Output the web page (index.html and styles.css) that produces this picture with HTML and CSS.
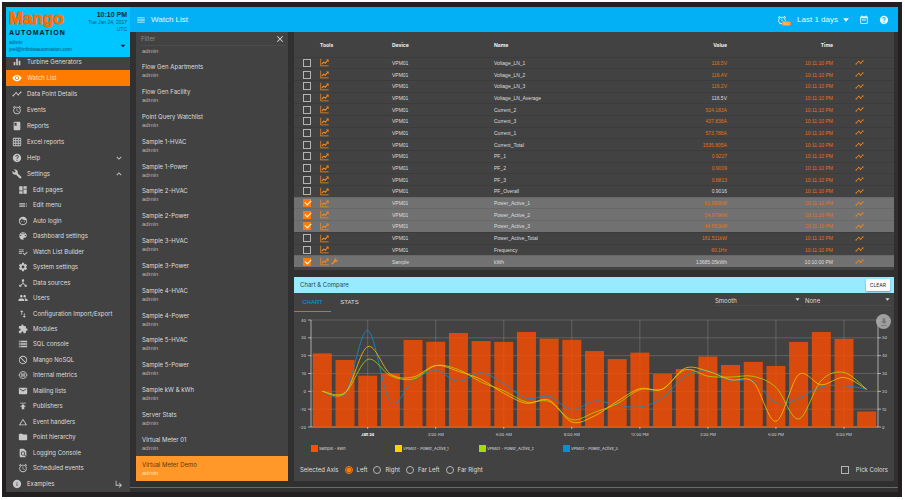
FILE: index.html
```html
<!DOCTYPE html>
<html lang="en">
<head>
<meta charset="utf-8">
<meta name="viewport" content="width=device-width, initial-scale=1">
<title>Mango Automation - Watch List</title>
<link rel="stylesheet" href="styles.css">
</head>
<body>
<svg class="sprite" aria-hidden="true">
  <symbol id="bars" viewBox="0 0 24 24"><path d="M10 20h4V4h-4v16zm-6 0h4v-8H4v8zM16 9v11h4V9h-4z"/></symbol>
  <symbol id="eye" viewBox="0 0 24 24"><path d="M12 4.5C7 4.5 2.73 7.61 1 12c1.73 4.39 6 7.5 11 7.5s9.27-3.11 11-7.5c-1.73-4.39-6-7.5-11-7.5zM12 17c-2.76 0-5-2.24-5-5s2.24-5 5-5 5 2.24 5 5-2.24 5-5 5zm0-8c-1.66 0-3 1.34-3 3s1.34 3 3 3 3-1.34 3-3-1.34-3-3-3z"/></symbol>
  <symbol id="timeline" viewBox="0 0 24 24"><path d="M23 8c0 1.1-.9 2-2 2-.18 0-.35-.02-.51-.07l-3.56 3.55c.05.16.07.34.07.52 0 1.1-.9 2-2 2s-2-.9-2-2c0-.18.02-.36.07-.52l-2.55-2.55c-.16.05-.34.07-.52.07s-.36-.02-.52-.07l-4.55 4.56c.05.16.07.33.07.51 0 1.1-.9 2-2 2s-2-.9-2-2 .9-2 2-2c.18 0 .35.02.51.07l4.56-4.55C8.02 9.36 8 9.18 8 9c0-1.1.9-2 2-2s2 .9 2 2c0 .18-.02.36-.07.52l2.55 2.55c.16-.05.34-.07.52-.07s.36.02.52.07l3.55-3.56C19.02 8.35 19 8.18 19 8c0-1.1.9-2 2-2s2 .9 2 2z"/></symbol>
  <symbol id="alarm" viewBox="0 0 24 24"><path d="M22 5.72l-4.6-3.86-1.29 1.53 4.6 3.86L22 5.72zM7.88 3.39L6.6 1.86 2 5.71l1.29 1.53 4.59-3.85zM12.5 8H11v6l4.75 2.85.75-1.23-4-2.37V8zM12 4c-4.97 0-9 4.03-9 9s4.02 9 9 9c4.97 0 9-4.03 9-9s-4.03-9-9-9zm0 16c-3.87 0-7-3.13-7-7s3.13-7 7-7 7 3.13 7 7-3.13 7-7 7z"/></symbol>
  <symbol id="book" viewBox="0 0 24 24"><path d="M18 2H6c-1.1 0-2 .9-2 2v16c0 1.1.9 2 2 2h12c1.1 0 2-.9 2-2V4c0-1.1-.9-2-2-2zM6 4h5v8l-2.5-1.5L6 12V4z"/></symbol>
  <symbol id="grid" viewBox="0 0 24 24"><path d="M20 2H4c-1.1 0-2 .9-2 2v16c0 1.1.9 2 2 2h16c1.1 0 2-.9 2-2V4c0-1.1-.9-2-2-2zM8 20H4v-4h4v4zm0-6H4v-4h4v4zm0-6H4V4h4v4zm6 12h-4v-4h4v4zm0-6h-4v-4h4v4zm0-6h-4V4h4v4zm6 12h-4v-4h4v4zm0-6h-4v-4h4v4zm0-6h-4V4h4v4z"/></symbol>
  <symbol id="help" viewBox="0 0 24 24"><path d="M12 2C6.48 2 2 6.48 2 12s4.48 10 10 10 10-4.48 10-10S17.52 2 12 2zm1 17h-2v-2h2v2zm2.07-7.75l-.9.92C13.45 12.9 13 13.5 13 15h-2v-.5c0-1.1.45-2.1 1.17-2.83l1.24-1.26c.37-.36.59-.86.59-1.41 0-1.1-.9-2-2-2s-2 .9-2 2H8c0-2.21 1.79-4 4-4s4 1.79 4 4c0 .88-.36 1.68-.93 2.25z"/></symbol>
  <symbol id="build" viewBox="0 0 24 24"><path d="M22.7 19l-9.1-9.1c.9-2.3.4-5-1.5-6.9-2-2-5-2.4-7.4-1.3L9 6 6 9 1.6 4.7C.4 7.1.9 10.1 2.9 12.1c1.9 1.9 4.6 2.4 6.9 1.5l9.1 9.1c.4.4 1 .4 1.4 0l2.3-2.3c.5-.4.5-1.1.1-1.4z"/></symbol>
  <symbol id="dashboard" viewBox="0 0 24 24"><path d="M3 13h8V3H3v10zm0 8h8v-6H3v6zm10 0h8V11h-8v10zm0-18v6h8V3h-8z"/></symbol>
  <symbol id="toc" viewBox="0 0 24 24"><path d="M3 9h14V7H3v2zm0 4h14v-2H3v2zm0 4h14v-2H3v2zm16 0h2v-2h-2v2zm0-10v2h2V7h-2zm0 6h2v-2h-2v2z"/></symbol>
  <symbol id="face" viewBox="0 0 24 24"><path d="M9 11.75c-.69 0-1.25.56-1.25 1.25s.56 1.25 1.25 1.25 1.25-.56 1.25-1.25-.56-1.25-1.25-1.25zm6 0c-.69 0-1.25.56-1.25 1.25s.56 1.25 1.25 1.25 1.25-.56 1.25-1.25-.56-1.25-1.25-1.25zM12 2C6.48 2 2 6.48 2 12s4.48 10 10 10 10-4.48 10-10S17.52 2 12 2zm0 18c-4.41 0-8-3.59-8-8 0-.29.02-.58.05-.86 2.36-1.05 4.23-2.98 5.21-5.37C11.07 8.33 14.05 10 17.42 10c.78 0 1.53-.09 2.25-.26.21.71.33 1.47.33 2.26 0 4.41-3.59 8-8 8z"/></symbol>
  <symbol id="palette" viewBox="0 0 24 24"><path d="M12 3c-4.97 0-9 4.03-9 9s4.03 9 9 9c.83 0 1.5-.67 1.5-1.5 0-.39-.15-.74-.39-1.01-.23-.26-.38-.61-.38-.99 0-.83.67-1.5 1.5-1.5H16c2.76 0 5-2.24 5-5 0-4.42-4.03-8-9-8zm-5.5 9c-.83 0-1.5-.67-1.5-1.5S5.67 9 6.5 9 8 9.67 8 10.5 7.33 12 6.5 12zm3-4C8.67 8 8 7.33 8 6.5S8.67 5 9.5 5s1.5.67 1.5 1.5S10.33 8 9.5 8zm5 0c-.83 0-1.5-.67-1.5-1.5S13.67 5 14.5 5s1.5.67 1.5 1.5S15.33 8 14.5 8zm3 4c-.83 0-1.5-.67-1.5-1.5S16.67 9 17.5 9s1.5.67 1.5 1.5-.67 1.5-1.5 1.5z"/></symbol>
  <symbol id="playlist" viewBox="0 0 24 24"><path d="M14 10H2v2h12v-2zm0-4H2v2h12V6zM2 16h8v-2H2v2zm19.5-4.5L23 13l-6.99 7-4.51-4.5L13 14l3.01 3 5.49-5.5z"/></symbol>
  <symbol id="gear" viewBox="0 0 24 24"><path d="M19.43 12.98c.04-.32.07-.64.07-.98s-.03-.66-.07-.98l2.11-1.65c.19-.15.24-.42.12-.64l-2-3.46c-.12-.22-.39-.3-.61-.22l-2.49 1c-.52-.4-1.08-.73-1.69-.98l-.38-2.65C14.46 2.18 14.25 2 14 2h-4c-.25 0-.46.18-.49.42l-.38 2.65c-.61.25-1.17.59-1.69.98l-2.49-1c-.23-.09-.49 0-.61.22l-2 3.46c-.13.22-.07.49.12.64l2.11 1.65c-.04.32-.07.65-.07.98s.03.66.07.98l-2.11 1.65c-.19.15-.24.42-.12.64l2 3.46c.12.22.39.3.61.22l2.49-1c.52.4 1.08.73 1.69.98l.38 2.65c.03.24.24.42.49.42h4c.25 0 .46-.18.49-.42l.38-2.65c.61-.25 1.17-.59 1.69-.98l2.49 1c.23.09.49 0 .61-.22l2-3.46c.12-.22.07-.49-.12-.64l-2.11-1.65zM12 15.5c-1.93 0-3.5-1.57-3.5-3.5s1.57-3.5 3.5-3.5 3.5 1.57 3.5 3.5-1.57 3.5-3.5 3.5z"/></symbol>
  <symbol id="hub" viewBox="0 0 24 24"><path d="M17 16l-4-4V8.82C14.16 8.4 15 7.3 15 6c0-1.66-1.34-3-3-3S9 4.34 9 6c0 1.3.84 2.4 2 2.82V12l-4 4H3v5h5v-3.05l4-4.2 4 4.2V21h5v-5h-4z"/></symbol>
  <symbol id="people" viewBox="0 0 24 24"><path d="M16 11c1.66 0 2.99-1.34 2.99-3S17.66 5 16 5c-1.66 0-3 1.34-3 3s1.34 3 3 3zm-8 0c1.66 0 2.99-1.34 2.99-3S9.66 5 8 5C6.34 5 5 6.34 5 8s1.34 3 3 3zm0 2c-2.33 0-7 1.17-7 3.5V19h14v-2.5c0-2.33-4.67-3.5-7-3.5zm8 0c-.29 0-.62.02-.97.05 1.16.84 1.97 1.97 1.97 3.45V19h6v-2.5c0-2.33-4.67-3.5-7-3.5z"/></symbol>
  <symbol id="swap" viewBox="0 0 24 24"><path d="M9 3L5 6.99h3V14h2V6.99h3L9 3zm7 14.01V10h-2v7.01h-3L15 21l4-3.99h-3z"/></symbol>
  <symbol id="puzzle" viewBox="0 0 24 24"><path d="M20.5 11H19V7c0-1.1-.9-2-2-2h-4V3.5C13 2.12 11.88 1 10.5 1S8 2.12 8 3.5V5H4c-1.1 0-1.99.9-1.99 2v3.8H3.5c1.49 0 2.7 1.21 2.7 2.7s-1.21 2.7-2.7 2.7H2V20c0 1.1.9 2 2 2h3.8v-1.5c0-1.49 1.21-2.7 2.7-2.7 1.49 0 2.7 1.21 2.7 2.7V22H17c1.1 0 2-.9 2-2v-4h1.5c1.38 0 2.5-1.12 2.5-2.5S21.88 11 20.5 11z"/></symbol>
  <symbol id="storage" viewBox="0 0 24 24"><path d="M2 20h20v-4H2v4zm2-3h2v2H4v-2zM2 4v4h20V4H2zm4 3H4V5h2v2zm-4 7h20v-4H2v4zm2-3h2v2H4v-2z"/></symbol>
  <symbol id="blocked" viewBox="0 0 24 24"><path d="M12 2C6.48 2 2 6.48 2 12s4.48 10 10 10 10-4.48 10-10S17.52 2 12 2zm0 18c-4.42 0-8-3.58-8-8 0-1.85.63-3.55 1.69-4.9L16.9 18.31C15.55 19.37 13.85 20 12 20zm6.31-3.1L7.1 5.69C8.45 4.63 10.15 4 12 4c4.42 0 8 3.58 8 8 0 1.85-.63 3.55-1.69 4.9z"/></symbol>
  <symbol id="metrics" viewBox="0 0 24 24"><g fill="none" stroke="currentColor" stroke-width="2"><circle cx="12" cy="12" r="8.5"/><path d="M9 7v10M15 7v10M9 10h6M9 14h6M1 12h3M20 12h3"/></g></symbol>
  <symbol id="mail" viewBox="0 0 24 24"><path d="M20 4H4c-1.1 0-2 .9-2 2v12c0 1.1.9 2 2 2h16c1.1 0 2-.9 2-2V6c0-1.1-.9-2-2-2zm0 4l-8 5-8-5V6l8 5 8-5v2z"/></symbol>
  <symbol id="publish" viewBox="0 0 24 24"><path d="M5 4v2h14V4H5zm0 10h4v6h6v-6h4l-7-7-7 7z"/></symbol>
  <symbol id="triangle" viewBox="0 0 24 24"><path d="M12 7.77L18.39 18H5.61L12 7.77M12 4L2 20h20L12 4z"/></symbol>
  <symbol id="folder" viewBox="0 0 24 24"><path d="M10 4H4c-1.1 0-1.99.9-1.99 2L2 18c0 1.1.9 2 2 2h16c1.1 0 2-.9 2-2V8c0-1.1-.9-2-2-2h-8l-2-2z"/></symbol>
  <symbol id="find" viewBox="0 0 24 24"><path d="M20 19.59V8l-6-6H6c-1.1 0-1.99.9-1.99 2L4 20c0 1.1.89 2 1.99 2H18c.45 0 .85-.15 1.19-.4l-4.43-4.43c-.8.52-1.74.83-2.76.83-2.76 0-5-2.24-5-5s2.24-5 5-5 5 2.24 5 5c0 1.02-.31 1.96-.83 2.75L20 19.59zM9 13c0 1.66 1.34 3 3 3s3-1.34 3-3-1.34-3-3-3-3 1.34-3 3z"/></symbol>
  <symbol id="info" viewBox="0 0 24 24"><path d="M12 2C6.48 2 2 6.48 2 12s4.48 10 10 10 10-4.48 10-10S17.52 2 12 2zm1 15h-2v-6h2v6zm0-8h-2V7h2v2z"/></symbol>
  <symbol id="subdir" viewBox="0 0 24 24"><path d="M19 15l-6 6-1.42-1.42L15.17 16H4V4h2v10h9.17l-3.59-3.58L13 9l6 6z"/></symbol>
  <symbol id="down" viewBox="0 0 24 24"><path d="M16.59 8.59L12 13.17 7.41 8.59 6 10l6 6 6-6z"/></symbol>
  <symbol id="up" viewBox="0 0 24 24"><path d="M12 8l-6 6 1.41 1.41L12 10.83l4.59 4.58L18 14z"/></symbol>
  <symbol id="drop" viewBox="0 0 24 24"><path d="M5 8l7 8 7-8z"/></symbol>
  <symbol id="menu" viewBox="0 0 24 24"><path d="M3 18h18v-2H3v2zm0-5h18v-2H3v2zm0-7v2h18V6H3z"/></symbol>
  <symbol id="close" viewBox="0 0 24 24"><path d="M19 6.41L17.59 5 12 10.59 6.41 5 5 6.41 10.59 12 5 17.59 6.41 19 12 13.41 17.59 19 19 17.59 13.41 12z"/></symbol>
  <symbol id="calendar" viewBox="0 0 24 24"><path d="M19 3h-1V1h-2v2H8V1H6v2H5c-1.1 0-2 .9-2 2v14c0 1.1.9 2 2 2h14c1.1 0 2-.9 2-2V5c0-1.1-.9-2-2-2zm0 16H5V8h14v11zM7 11h10v2H7z"/></symbol>
  <symbol id="chart" viewBox="0 0 24 24"><path d="M1 2h2v18h20v2H1z"/><path d="M5 16l5-5 4 3 6-7" fill="none" stroke="currentColor" stroke-width="3"/><path d="M16 4h7v7z"/></symbol>
  <symbol id="download" viewBox="0 0 24 24"><path d="M19 10h-4V3H9v7H5l7 7 7-7zM5 19v2h14v-2H5z"/></symbol>
</svg>

<div class="app">
  <aside class="sidebar">
    <header class="account">
      <div class="account-top">
        <div class="logo"><span class="logo-name">Mango</span><span class="logo-sub">AUTOMATION</span></div>
        <div class="clock"><strong>10:10 PM</strong><span>Tue Jan 24, 2017</span><span>UTC</span></div>
      </div>
      <button class="user" type="button"><span>admin<br>joel@infiniteautomation.com</span><svg class="icon"><use href="#drop"/></svg></button>
    </header>
    <nav class="nav">
      <ul class="menu">
        <li><a href="#"><svg class="icon"><use href="#bars"/></svg>Turbine Generators</a></li>
        <li><a href="#" class="active"><svg class="icon"><use href="#eye"/></svg>Watch List</a></li>
        <li><a href="#"><svg class="icon"><use href="#timeline"/></svg>Data Point Details</a></li>
        <li><a href="#"><svg class="icon"><use href="#alarm"/></svg>Events</a></li>
        <li><a href="#"><svg class="icon"><use href="#book"/></svg>Reports</a></li>
        <li><a href="#"><svg class="icon"><use href="#grid"/></svg>Excel reports</a></li>
        <li><a href="#"><svg class="icon"><use href="#help"/></svg>Help<svg class="icon toggle"><use href="#down"/></svg></a></li>
        <li class="open"><a href="#"><svg class="icon"><use href="#build"/></svg>Settings<svg class="icon toggle"><use href="#up"/></svg></a>
          <ul class="submenu">
            <li><a href="#"><svg class="icon"><use href="#dashboard"/></svg>Edit pages</a></li>
            <li><a href="#"><svg class="icon"><use href="#toc"/></svg>Edit menu</a></li>
            <li><a href="#"><svg class="icon"><use href="#face"/></svg>Auto login</a></li>
            <li><a href="#"><svg class="icon"><use href="#palette"/></svg>Dashboard settings</a></li>
            <li><a href="#"><svg class="icon"><use href="#playlist"/></svg>Watch List Builder</a></li>
            <li><a href="#"><svg class="icon"><use href="#gear"/></svg>System settings</a></li>
            <li><a href="#"><svg class="icon"><use href="#hub"/></svg>Data sources</a></li>
            <li><a href="#"><svg class="icon"><use href="#people"/></svg>Users</a></li>
            <li><a href="#"><svg class="icon"><use href="#swap"/></svg>Configuration Import/Export</a></li>
            <li><a href="#"><svg class="icon"><use href="#puzzle"/></svg>Modules</a></li>
            <li><a href="#"><svg class="icon"><use href="#storage"/></svg>SQL console</a></li>
            <li><a href="#"><svg class="icon"><use href="#blocked"/></svg>Mango NoSQL</a></li>
            <li><a href="#"><svg class="icon"><use href="#metrics"/></svg>Internal metrics</a></li>
            <li><a href="#"><svg class="icon"><use href="#mail"/></svg>Mailing lists</a></li>
            <li><a href="#"><svg class="icon"><use href="#publish"/></svg>Publishers</a></li>
            <li><a href="#"><svg class="icon"><use href="#triangle"/></svg>Event handlers</a></li>
            <li><a href="#"><svg class="icon"><use href="#folder"/></svg>Point hierarchy</a></li>
            <li><a href="#"><svg class="icon"><use href="#find"/></svg>Logging Console</a></li>
            <li><a href="#"><svg class="icon"><use href="#alarm"/></svg>Scheduled events</a></li>
          </ul>
        </li>
        <li><a href="#"><svg class="icon"><use href="#info"/></svg>Examples<svg class="icon toggle"><use href="#subdir"/></svg></a></li>
      </ul>
    </nav>
  </aside>

  <div class="page">
    <header class="toolbar">
      <button type="button" aria-label="Menu"><svg class="icon"><use href="#menu"/></svg></button>
      <h1>Watch List</h1>
      <div class="actions">
        <button type="button" class="alarms" aria-label="Alarms"><svg class="icon"><use href="#alarm"/></svg><span class="badge">800</span></button>
        <button type="button" class="range">Last 1 days<svg class="icon"><use href="#drop"/></svg></button>
        <button type="button" aria-label="Date range"><svg class="icon"><use href="#calendar"/></svg></button>
        <button type="button" aria-label="Help"><svg class="icon"><use href="#help"/></svg></button>
      </div>
    </header>

    <main class="content">
      <section class="lists">
        <div class="filter"><input type="text" placeholder="Filter" aria-label="Filter"><button type="button" aria-label="Clear filter"><svg class="icon"><use href="#close"/></svg></button></div>
        <div class="scroller">
          <ul>
            <li><a href="#"><small>admin</small></a></li>
            <li><a href="#">Flow Gen Apartments<small>admin</small></a></li>
            <li><a href="#">Flow Gen Facility<small>admin</small></a></li>
            <li><a href="#">Point Query Watchlist<small>admin</small></a></li>
            <li><a href="#">Sample 1-HVAC<small>admin</small></a></li>
            <li><a href="#">Sample 1-Power<small>admin</small></a></li>
            <li><a href="#">Sample 2-HVAC<small>admin</small></a></li>
            <li><a href="#">Sample 2-Power<small>admin</small></a></li>
            <li><a href="#">Sample 3-HVAC<small>admin</small></a></li>
            <li><a href="#">Sample 3-Power<small>admin</small></a></li>
            <li><a href="#">Sample 4-HVAC<small>admin</small></a></li>
            <li><a href="#">Sample 4-Power<small>admin</small></a></li>
            <li><a href="#">Sample 5-HVAC<small>admin</small></a></li>
            <li><a href="#">Sample 5-Power<small>admin</small></a></li>
            <li><a href="#">Sample kW &amp; kWh<small>admin</small></a></li>
            <li><a href="#">Server Stats<small>admin</small></a></li>
            <li><a href="#">Virtual Meter 01<small>admin</small></a></li>
            <li><a href="#" class="selected">Virtual Meter Demo<small>admin</small></a></li>
          </ul>
        </div>
      </section>

      <div class="column">
        <section class="card points-card">
          <table class="points">
            <colgroup><col class="c-check"><col class="c-tools"><col class="c-device"><col class="c-name"><col class="c-value"><col class="c-time"><col></colgroup>
            <thead><tr><th></th><th>Tools</th><th>Device</th><th>Name</th><th class="num">Value</th><th class="num">Time</th><th></th></tr></thead>
            <tbody>
              <tr><td><input type="checkbox" aria-label="Voltage_LN_1"></td><td><svg class="icon"><use href="#chart"/></svg></td><td>VPM01</td><td>Voltage_LN_1</td><td class="num fresh">116.5V</td><td class="num fresh">10:11:10 PM</td><td><svg class="icon"><use href="#timeline"/></svg></td></tr>
              <tr><td><input type="checkbox" aria-label="Voltage_LN_2"></td><td><svg class="icon"><use href="#chart"/></svg></td><td>VPM01</td><td>Voltage_LN_2</td><td class="num fresh">116.4V</td><td class="num fresh">10:11:10 PM</td><td><svg class="icon"><use href="#timeline"/></svg></td></tr>
              <tr><td><input type="checkbox" aria-label="Voltage_LN_3"></td><td><svg class="icon"><use href="#chart"/></svg></td><td>VPM01</td><td>Voltage_LN_3</td><td class="num fresh">116.2V</td><td class="num fresh">10:11:10 PM</td><td><svg class="icon"><use href="#timeline"/></svg></td></tr>
              <tr><td><input type="checkbox" aria-label="Voltage_LN_Average"></td><td><svg class="icon"><use href="#chart"/></svg></td><td>VPM01</td><td>Voltage_LN_Average</td><td class="num">116.5V</td><td class="num fresh">10:11:10 PM</td><td><svg class="icon"><use href="#timeline"/></svg></td></tr>
              <tr><td><input type="checkbox" aria-label="Current_2"></td><td><svg class="icon"><use href="#chart"/></svg></td><td>VPM01</td><td>Current_2</td><td class="num fresh">524.183A</td><td class="num fresh">10:11:10 PM</td><td><svg class="icon"><use href="#timeline"/></svg></td></tr>
              <tr><td><input type="checkbox" aria-label="Current_3"></td><td><svg class="icon"><use href="#chart"/></svg></td><td>VPM01</td><td>Current_3</td><td class="num fresh">437.836A</td><td class="num fresh">10:11:10 PM</td><td><svg class="icon"><use href="#timeline"/></svg></td></tr>
              <tr><td><input type="checkbox" aria-label="Current_1"></td><td><svg class="icon"><use href="#chart"/></svg></td><td>VPM01</td><td>Current_1</td><td class="num fresh">573.786A</td><td class="num fresh">10:11:10 PM</td><td><svg class="icon"><use href="#timeline"/></svg></td></tr>
              <tr><td><input type="checkbox" aria-label="Current_Total"></td><td><svg class="icon"><use href="#chart"/></svg></td><td>VPM01</td><td>Current_Total</td><td class="num fresh">1535.805A</td><td class="num fresh">10:11:10 PM</td><td><svg class="icon"><use href="#timeline"/></svg></td></tr>
              <tr><td><input type="checkbox" aria-label="PF_1"></td><td><svg class="icon"><use href="#chart"/></svg></td><td>VPM01</td><td>PF_1</td><td class="num fresh">0.9227</td><td class="num fresh">10:11:10 PM</td><td><svg class="icon"><use href="#timeline"/></svg></td></tr>
              <tr><td><input type="checkbox" aria-label="PF_2"></td><td><svg class="icon"><use href="#chart"/></svg></td><td>VPM01</td><td>PF_2</td><td class="num fresh">0.9009</td><td class="num fresh">10:11:10 PM</td><td><svg class="icon"><use href="#timeline"/></svg></td></tr>
              <tr><td><input type="checkbox" aria-label="PF_3"></td><td><svg class="icon"><use href="#chart"/></svg></td><td>VPM01</td><td>PF_3</td><td class="num fresh">0.8813</td><td class="num fresh">10:11:10 PM</td><td><svg class="icon"><use href="#timeline"/></svg></td></tr>
              <tr><td><input type="checkbox" aria-label="PF_Overall"></td><td><svg class="icon"><use href="#chart"/></svg></td><td>VPM01</td><td>PF_Overall</td><td class="num">0.9016</td><td class="num fresh">10:11:10 PM</td><td><svg class="icon"><use href="#timeline"/></svg></td></tr>
              <tr class="checked"><td><input type="checkbox" checked aria-label="Power_Active_1"></td><td><svg class="icon"><use href="#chart"/></svg></td><td>VPM01</td><td>Power_Active_1</td><td class="num fresh">61.680kW</td><td class="num fresh">10:11:10 PM</td><td><svg class="icon"><use href="#timeline"/></svg></td></tr>
              <tr class="checked"><td><input type="checkbox" checked aria-label="Power_Active_2"></td><td><svg class="icon"><use href="#chart"/></svg></td><td>VPM01</td><td>Power_Active_2</td><td class="num fresh">54.979kW</td><td class="num fresh">10:11:10 PM</td><td><svg class="icon"><use href="#timeline"/></svg></td></tr>
              <tr class="checked"><td><input type="checkbox" checked aria-label="Power_Active_3"></td><td><svg class="icon"><use href="#chart"/></svg></td><td>VPM01</td><td>Power_Active_3</td><td class="num fresh">44.852kW</td><td class="num fresh">10:11:10 PM</td><td><svg class="icon"><use href="#timeline"/></svg></td></tr>
              <tr><td><input type="checkbox" aria-label="Power_Active_Total"></td><td><svg class="icon"><use href="#chart"/></svg></td><td>VPM01</td><td>Power_Active_Total</td><td class="num fresh">161.511kW</td><td class="num fresh">10:11:10 PM</td><td><svg class="icon"><use href="#timeline"/></svg></td></tr>
              <tr><td><input type="checkbox" aria-label="Frequency"></td><td><svg class="icon"><use href="#chart"/></svg></td><td>VPM01</td><td>Frequency</td><td class="num fresh">60.1Hz</td><td class="num fresh">10:11:10 PM</td><td><svg class="icon"><use href="#timeline"/></svg></td></tr>
              <tr class="checked"><td><input type="checkbox" checked aria-label="kWh"></td><td><svg class="icon"><use href="#chart"/></svg><svg class="icon wrench"><use href="#build"/></svg></td><td>Sample</td><td>kWh</td><td class="num">13685.05kWh</td><td class="num">10:10:00 PM</td><td><svg class="icon"><use href="#timeline"/></svg></td></tr>
            </tbody>
          </table>
        </section>

        <section class="card chart-card">
          <header class="chart-head"><h2>Chart &amp; Compare</h2><button type="button" class="clear">CLEAR</button></header>
          <div class="chart-bar">
            <div class="tabs"><button type="button" class="on">CHART</button><button type="button">STATS</button></div>
            <div class="pick"><select aria-label="Line style"><option>Smooth</option></select><svg class="icon"><use href="#drop"/></svg></div>
            <div class="pick"><select aria-label="Rollup"><option>None</option></select><svg class="icon"><use href="#drop"/></svg></div>
          </div>
          <div class="plot">
            <svg id="plot" viewBox="0 0 600 128" role="img" aria-label="Sample kWh and VPM01 active power"></svg>
            <button type="button" class="export" aria-label="Export"><svg class="icon"><use href="#download"/></svg></button>
          </div>
          <ul class="legend">
            <li class="s-bar">Sample - kWh</li>
            <li class="s-one">VPM01 - Power_Active_1</li>
            <li class="s-two">VPM01 - Power_Active_2</li>
            <li class="s-three">VPM01 - Power_Active_3</li>
          </ul>
          <div class="axis-row">
            <span>Selected Axis</span>
            <label><input type="radio" name="axis" checked>Left</label>
            <label><input type="radio" name="axis">Right</label>
            <label><input type="radio" name="axis">Far Left</label>
            <label><input type="radio" name="axis">Far Right</label>
            <label class="colors"><input type="checkbox">Pick Colors</label>
          </div>
        </section>
      </div>
    </main>
  </div>
</div>
<script src="chart.js"></script>
</body>
</html>
```
FILE: styles.css
```css
* { box-sizing: border-box; }

body {
  margin: 0;
  padding: 2px 3px 3px 2px;
  height: 100vh;
  overflow: hidden;
  background: #fff;
  color: #dedede;
  font: 6px/8px Inter, "Liberation Sans", sans-serif;
}

ul { list-style: none; margin: 0; padding: 0; }
a { color: inherit; text-decoration: none; }
h1, h2 { margin: 0; font-weight: 400; }

button, input, select {
  margin: 0;
  padding: 0;
  border: 0;
  background: none;
  color: inherit;
  font: inherit;
}

button { display: flex; align-items: center; }

.sprite { display: none; }

.icon {
  display: block;
  flex: none;
  width: 10px;
  height: 10px;
  fill: currentColor;
}

.app {
  display: flex;
  height: 100%;
  border: solid #231f20;
  border-width: 5px 4px;
  background: #303030;
}

/* Sidebar */
.sidebar {
  display: flex;
  flex-direction: column;
  flex: none;
  width: 124px;
  background: #424242;
}

.account {
  flex: none;
  height: 50px;
  padding: 2px 3px;
  background: #00c6ff;
  color: #07506b;
  font: 5px/7px "Liberation Sans", sans-serif;
  position: relative;
  z-index: 1;
}

.account-top { display: flex; justify-content: space-between; height: 30px; }

.logo { display: flex; flex-direction: column; }

.logo-name {
  color: #ff7a00;
  font: bold 17px/20px "Liberation Sans", sans-serif;
  -webkit-text-stroke: 1px #f06c00;
}

.logo-sub {
  color: #06141c;
  font: bold 7px/8px "Liberation Sans", sans-serif;
  letter-spacing: 1px;
}

.clock { display: flex; flex-direction: column; align-items: flex-end; padding-top: 2px; }
.clock strong { color: #0a2a38; font-size: 7px; line-height: 8px; }

.user { width: 100%; justify-content: space-between; text-align: left; }
.user .icon { width: 8px; height: 8px; color: #06141c; }

.nav { flex: 1; min-height: 0; overflow: hidden; display: flex; }

.menu {
  flex: 1;
  display: flex;
  flex-direction: column;
  margin-top: -3px;
}

.menu a {
  display: flex;
  align-items: center;
  gap: 5px;
  height: 16px;
  padding: 0 6px;
}

.menu .icon { color: #c8c8c8; }
.menu .active { background: #ff7b00; color: #ffe0c0; }
.menu .active .icon { color: #fff; }
.menu .toggle { margin-left: auto; }

.open { flex: 1; display: flex; flex-direction: column; }
.submenu { flex: 1; display: grid; grid-auto-rows: 1fr; }
.submenu a { height: 100%; padding-left: 12px; }

/* Toolbar */
.page { flex: 1; min-width: 0; display: flex; flex-direction: column; padding-bottom: 4px; }

.toolbar {
  flex: none;
  display: flex;
  align-items: center;
  height: 25px;
  padding: 0 9px 0 6px;
  gap: 5px;
  background: #04b0f5;
  color: #e6f8ff;
  font: 8px/10px "Liberation Sans", sans-serif;
}

.toolbar h1 { font-size: 8px; }
.actions { display: flex; align-items: center; gap: 10px; margin-left: auto; }
.range { gap: 3px; margin-right: -2px; }
.alarms { position: relative; }

.badge {
  position: absolute;
  left: 5px;
  top: 6px;
  padding: 0 1px;
  border-radius: 2px;
  background: #ff8a1c;
  color: #ffe0c0;
  font-size: 4px;
  line-height: 5px;
}

/* Content */
.content {
  flex: 1;
  min-height: 0;
  display: flex;
  gap: 6px;
  padding: 0 4px 6px 6px;
  border-bottom: 1px solid #6a6a6a;
}

.lists {
  flex: none;
  width: 152px;
  display: flex;
  flex-direction: column;
  background: #424242;
}

.filter {
  flex: none;
  display: flex;
  align-items: center;
  height: 14px;
  margin: 0 3px 0 5px;
  border-bottom: 1px solid #4c4c4c;
}

.filter input { flex: 1; min-width: 0; height: 12px; outline: 0; }
.filter input::placeholder { color: #8e8e8e; opacity: 1; }

.scroller { flex: 1; min-height: 0; overflow: hidden; display: flex; }
.scroller ul { flex: 1; display: grid; grid-auto-rows: 1fr; margin-top: -12px; }

.scroller a {
  display: flex;
  flex-direction: column;
  justify-content: center;
  height: 100%;
  padding: 0 6px;
}

.scroller li:first-child a { justify-content: flex-end; padding-bottom: 4px; }
.scroller small { color: #b4b4b4; font: 6px/8px "Liberation Sans", sans-serif; }
.scroller .selected { background: #ff9829; color: #5a3a10; }
.scroller .selected small { color: #ffe2b8; }

.column { flex: 1; min-width: 0; display: flex; flex-direction: column; gap: 7px; }
.card { background: #424242; }

.points-card { flex: none; padding-bottom: 3px; }

.points {
  width: 100%;
  height: 47vh;
  border-collapse: collapse;
  table-layout: fixed;
  font: 5px/6px "Liberation Sans", sans-serif;
}

.c-check { width: 4.333%; }
.c-tools { width: 12%; }
.c-device { width: 17%; }
.c-name { width: 21%; }
.c-value { width: 17.833%; }
.c-time { width: 17.667%; }

.points th { height: 25px; padding: 2px 0 0; text-align: left; color: #f0f0f0; font: bold 5px/6px Inter, sans-serif; }
.points td { padding: 0; border-top: 1px solid #3c3c3c; vertical-align: middle; }
.points .num { text-align: right; }
.points .fresh { color: #e27414; }
.points td .icon { display: inline-block; width: 9px; height: 9px; vertical-align: middle; color: #f58a1e; }
.points td .wrench { width: 7px; height: 7px; margin-left: 2px; transform: scaleX(-1); }
.points td:first-child { padding-left: 9px; }
.points td:last-child { padding-left: 22px; }
.points .checked { background: #717171; }
.points .checked td { border-color: #686868; }

input[type="checkbox"], input[type="radio"] {
  appearance: none;
  display: block;
  flex: none;
  width: 8px;
  height: 8px;
  border: 1px solid #b4b4b4;
}

input[type="checkbox"]:checked {
  border-color: #ff7b00;
  background: #ff7b00;
  position: relative;
}

input[type="checkbox"]:checked::after {
  content: "";
  position: absolute;
  left: 1px;
  top: 0;
  width: 5px;
  height: 3px;
  border: solid #fff;
  border-width: 0 0 1px 1px;
  transform: rotate(-45deg);
}

input[type="radio"] { border-radius: 50%; }
input[type="radio"]:checked { border-color: #ff7b00; background: radial-gradient(#ff7b00 0 2px, transparent 3px); }

/* Chart */
.chart-card { flex: 1; min-height: 0; display: flex; flex-direction: column; }

.chart-head {
  flex: none;
  display: flex;
  align-items: center;
  justify-content: space-between;
  height: 16px;
  padding: 0 4px 0 6px;
  background: #98eaff;
  color: #2c4a54;
}

.chart-head h2 { font-size: 6px; }

.clear {
  height: 12px;
  padding: 0 4px;
  border-radius: 1px;
  background: #fafafa;
  color: #303030;
  font: 5px/6px Inter, sans-serif;
  box-shadow: 0 1px 2px #00000055;
}

.chart-bar { flex: none; display: flex; gap: 3px; height: 19px; padding-right: 2px; }
.tabs { flex: 1; display: flex; }
.tabs button { justify-content: center; width: 37px; border-bottom: 1px solid transparent; font: 6px/8px "Liberation Sans", sans-serif; }
.tabs .on { color: #039be5; border-color: #d0701a; }

.pick { position: relative; align-self: flex-start; width: 87px; height: 13px; border-bottom: 1px solid #4c4c4c; }
.pick select { appearance: none; display: block; width: 100%; height: 12px; padding-top: 3px; outline: 0; }
.pick .icon { position: absolute; right: 1px; top: 3px; width: 7px; height: 7px; pointer-events: none; }

.plot { position: relative; flex: none; }
.plot > svg { display: block; width: 100%; }

.export {
  position: absolute;
  right: 3px;
  top: 2px;
  justify-content: center;
  width: 15px;
  height: 15px;
  border-radius: 50%;
  background: #aaaaaae6;
  color: #777;
}

.grid-line { stroke: #fff; stroke-opacity: .17; }
.axis { stroke: #fff; stroke-opacity: .55; }
.tick { fill: #d4d4d4; font: 4px Inter, sans-serif; }
.tick-strong { font-weight: bold; fill: #fff; }
.bar { fill: #ff4e00; fill-opacity: .8; }
.line { fill: none; stroke-width: 1; stroke-opacity: .8; }
.line-one { stroke: #fcc200; }
.line-two { stroke: #a5dc00; }
.line-three { stroke: #0d8ecf; }

.legend { flex: none; display: flex; height: 16px; padding-left: 17px; font: 4px/7px Inter, sans-serif; align-items: center; }
.legend li { display: flex; gap: 1px; flex: 0 0 84px; white-space: nowrap; }
.legend li::before { content: ""; width: 7px; height: 7px; background: var(--key); }
.s-bar { --key: #ff4e00; }
.s-one { --key: #fcd202; }
.s-two { --key: #a5dc00; }
.s-three { --key: #0d8ecf; }

.axis-row { flex: 1; display: flex; align-items: center; gap: 6px; padding: 2px 6px 0; }
.axis-row label { display: flex; align-items: center; gap: 4px; }
.axis-row .colors { margin-left: auto; gap: 7px; }
```
FILE: chart.js
```js
(function () {
  var svg = document.getElementById('plot');
  var left = 17, right = 584, top = 8, bottom = 115;
  var energy = [41.3, 37.6, 28.8, 30, 48.8, 47.8, 52.7, 48.2, 47.7, 53.3, 49.5, 48.9, 42.6, 38.1, 41.7, 29.7, 32.5, 39.5, 34.8, 36.5, 34.2, 47.7, 53.3, 49.4, 8.7];
  var power = {
    one: [0, -1, 25.1, 9.7, 8, 14.5, 11.2, 6.7, -1.1, -6.7, -4.9, -17.2, -13.8, -5.6, 1.5, 1.3, 13, 11.3, 6.5, 5.2, -16.8, 9.3, 3.7, 7.8, 1.1],
    two: [0, -0.8, 17.9, 8.8, 6.9, 14.4, 12.2, 5.2, 0.3, -6, -5.7, -15.9, -11.8, -6.9, 0.9, 1.3, 12.1, 8.5, 8, 8.4, 2.2, -15.5, 6.1, 10.6, 1.1],
    three: [0, -1.2, 34.1, -6, 6, 11.6, 5.5, 10.4, 4.4, -3.9, -2.9, -10.3, -5.4, -7.7, -8.8, -3.6, 8.5, 11.5, 5.9, 5.8, -6.5, -3.9, 2.6, 3.1, 1.3]
  };
  var hours = { 2: 'Jan 24', 5: '3:00 AM', 8: '6:00 AM', 11: '9:00 AM', 14: '12:00 PM', 17: '3:00 PM', 20: '6:00 PM', 23: '9:00 PM' };
  var step = (right - left) / energy.length;
  var unit = (bottom - top) / 60;

  function add(name, attrs, text) {
    var el = document.createElementNS('http://www.w3.org/2000/svg', name);
    Object.keys(attrs).forEach(function (key) { el.setAttribute(key, attrs[key]); });
    if (text !== undefined) el.textContent = text;
    svg.appendChild(el);
  }
  function x(i) { return left + step * (i + 0.5); }

  // Horizontal grid with both value scales
  for (var v = 0; v <= 60; v += 10) {
    var gy = bottom - v * unit;
    add('line', { x1: left, x2: right, y1: gy, y2: gy, 'class': v ? 'grid-line' : 'axis' });
    add('line', { x1: left - 3, x2: left, y1: gy, y2: gy, 'class': 'axis' });
    add('line', { x1: right, x2: right + 3, y1: gy, y2: gy, 'class': 'axis' });
    add('text', { x: left - 5, y: gy + 1.5, 'text-anchor': 'end', 'class': 'tick' }, v - 20);
    add('text', { x: right + 4, y: gy + 1.5, 'class': 'tick' }, v);
  }
  Object.keys(hours).forEach(function (i) {
    var gx = x(+i);
    add('line', { x1: gx, x2: gx, y1: top, y2: bottom, 'class': 'grid-line' });
    add('line', { x1: gx, x2: gx, y1: bottom, y2: bottom + 2, 'class': 'axis' });
    add('text', { x: gx, y: 124, 'text-anchor': 'middle', 'class': +i === 2 ? 'tick tick-strong' : 'tick' }, hours[i]);
  });

  energy.forEach(function (value, i) {
    add('rect', { x: x(i) - 9.5, y: bottom - value * unit, width: 19, height: value * unit, 'class': 'bar' });
  });

  // Smoothed power lines
  ['three', 'two', 'one'].forEach(function (key) {
    var pts = power[key].map(function (value, i) { return [x(i), bottom - (value + 20) * unit]; });
    var d = 'M' + pts[0].join(' ');
    for (var i = 0; i < pts.length - 1; i++) {
      var a = pts[i - 1] || pts[i], b = pts[i], c = pts[i + 1], e = pts[i + 2] || c;
      d += 'C' + [b[0] + (c[0] - a[0]) / 6, b[1] + (c[1] - a[1]) / 6, c[0] - (e[0] - b[0]) / 6, c[1] - (e[1] - b[1]) / 6, c[0], c[1]].join(' ');
    }
    add('path', { d: d, 'class': 'line line-' + key });
  });

  add('line', { x1: left, x2: left, y1: top, y2: bottom, 'class': 'axis' });
  add('line', { x1: right, x2: right, y1: top, y2: bottom, 'class': 'axis' });
})();
```
